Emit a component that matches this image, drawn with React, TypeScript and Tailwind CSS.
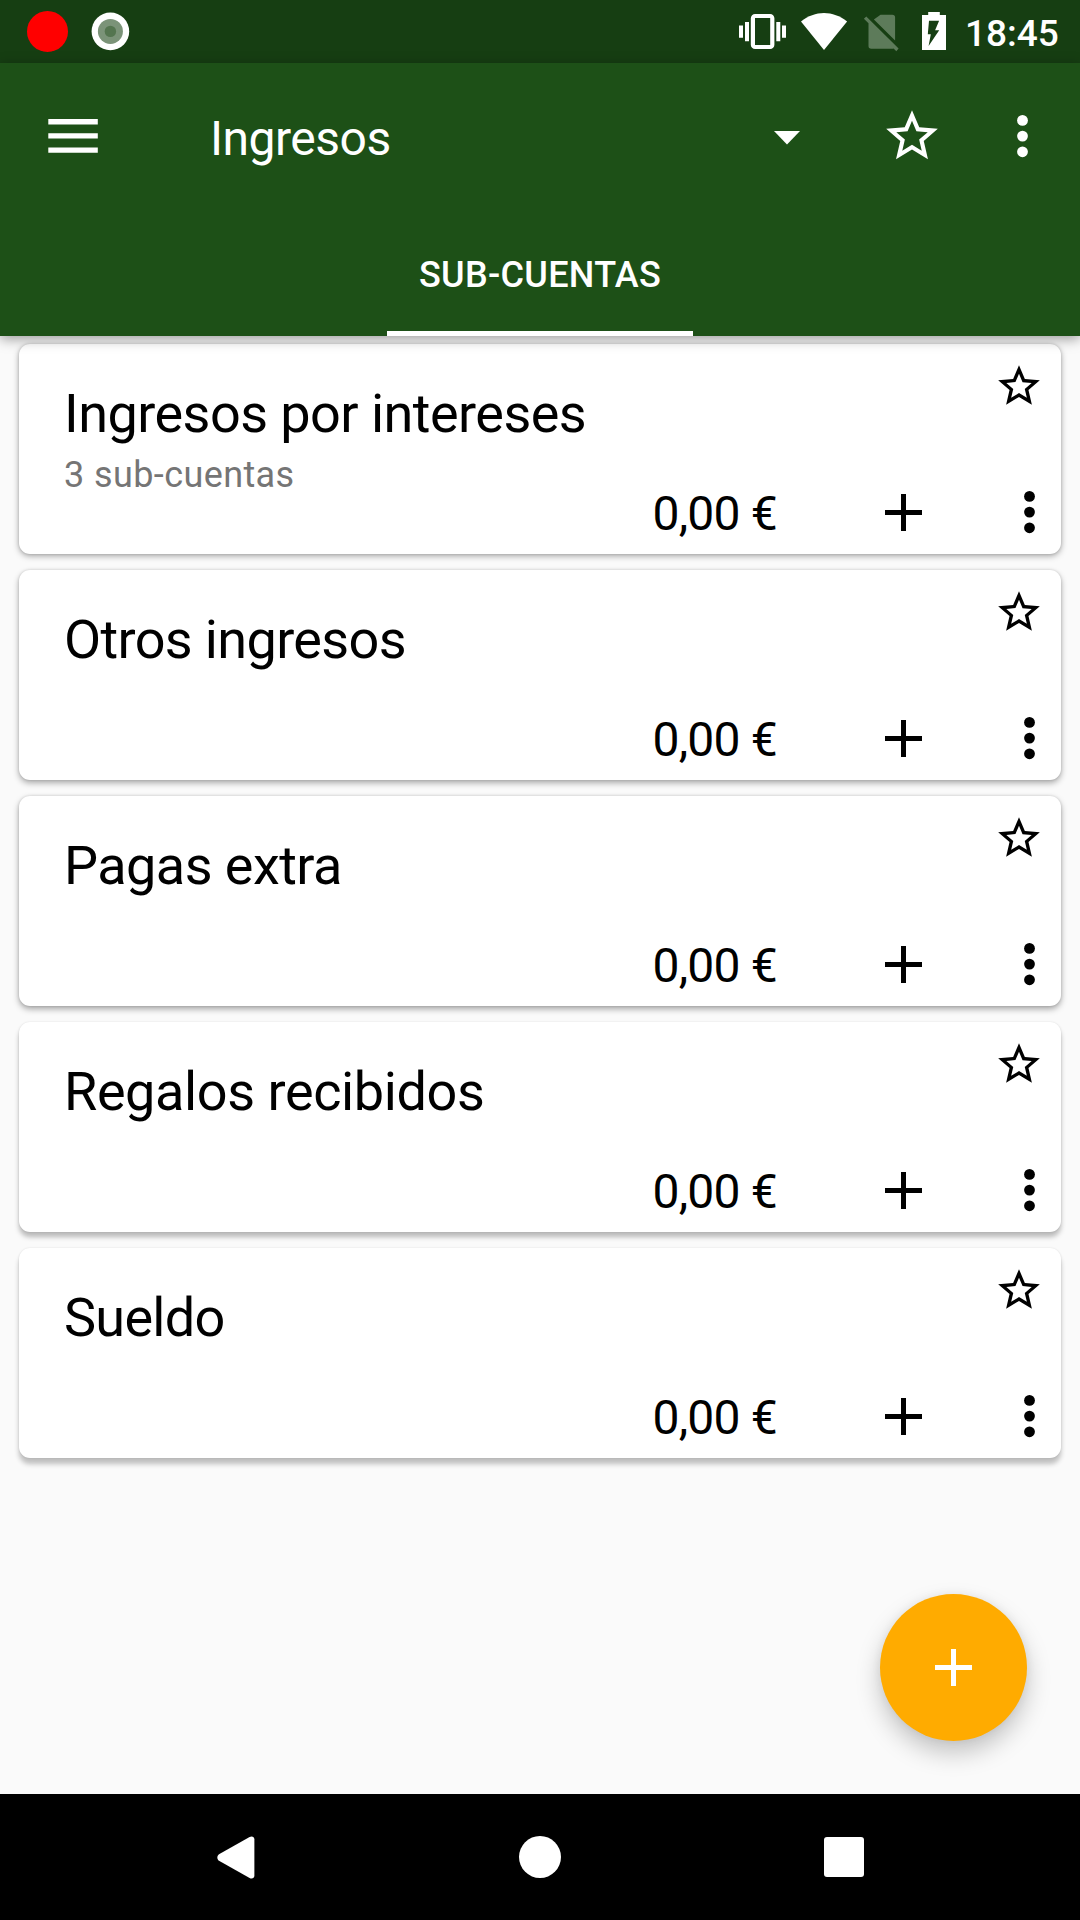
import React from "react";

const STAR =
  "M22 9.24l-7.19-.62L12 2 9.19 8.63 2 9.24l5.46 4.73L5.82 21 12 17.27 18.18 21l-1.63-7.03L22 9.24zM12 15.4l-3.76 2.27 1-4.28-3.32-2.88 4.38-.38L12 6.1l1.71 4.04 4.38.38-3.32 2.88 1 4.28L12 15.4z";

function Star({ className }: { className: string }) {
  return (
    <svg viewBox="0 0 24 24" fill="currentColor" className={className}>
      <path d={STAR} />
    </svg>
  );
}

function More({ className }: { className: string }) {
  return (
    <svg viewBox="0 0 11 43" fill="currentColor" className={className}>
      <circle cx="5.5" cy="5.4" r="5.4" />
      <circle cx="5.5" cy="21.1" r="5.4" />
      <circle cx="5.5" cy="36.8" r="5.4" />
    </svg>
  );
}

function Plus({ className }: { className: string }) {
  return (
    <svg viewBox="0 0 37 37" fill="currentColor" className={className}>
      <path d="M0 16h16V0h5v16h16v5H21v16h-5V21H0z" />
    </svg>
  );
}

function StatusBar() {
  return (
    <div className="flex h-[63px] shrink-0 justify-between bg-[#163e12] text-white">
      <svg width="140" height="63" viewBox="0 0 140 63">
        <circle cx="47.5" cy="31.4" r="20.5" fill="#ff0000" />
        <circle cx="110.4" cy="31.4" r="18.8" fill="#fff" />
        <circle cx="110.4" cy="31.4" r="12.5" fill="#7b9378" />
        <circle cx="110.4" cy="31.4" r="5.7" fill="#54754f" />
      </svg>
      <div className="flex">
        <svg width="220" height="63" viewBox="735 0 220 63" fill="#fff">
          <rect x="752.9" y="16" width="19.4" height="31" rx="2.2" fill="none" stroke="#fff" strokeWidth="4.2" />
          <path d="M739 25.5h4v12.3h-4zM745 22h4v19.3h-4zM776.3 22h4v19.3h-4zM782 25.5h4v12.3h-4z" />
          <path d="M824 50 801 21.6C808 16 816 13.1 824 13.1s16 2.9 23.1 8.5z" />
          <g fill="#5d7b5a">
            <path d="M880.5 14.7h11.8a2.8 2.8 0 0 1 2.8 2.8v22.9L873.9 19.6z" />
            <path d="M866.3 16.6 898.6 48.6 896.3 51.2 893.6 48.5a3 3 0 0 1-1.3.3h-21a2.8 2.8 0 0 1-2.8-2.8V23.3l-4.6-4.5z" />
          </g>
          <path
            fillRule="evenodd"
            d="M922 15h6.2v-3h11.6v3h6.2v35h-24zM929 20.8l-1.2 13.4h3l-2.2 11.8 10.6-15.8h-4.1l4-9.4z"
          />
        </svg>
        <span className="mr-[20px] w-[105px] pt-[12px] pl-[10px] text-[37px] leading-[44px] font-medium whitespace-nowrap">
          18:45
        </span>
      </div>
    </div>
  );
}

function Header() {
  return (
    <header className="relative z-10 flex h-[273px] shrink-0 flex-col bg-[#1d5017] text-white shadow-[0_3px_12px_rgba(0,0,0,0.38)]">
      <div className="flex h-[145px] items-center">
        <svg width="50" height="34" viewBox="0 0 50 34" fill="#fff" className="ml-[48px]">
          <path d="M.3 0h49.5v5.4H.3zM.3 14.2h49.5v5.4H.3zM.3 28.4h49.5v5.4H.3z" />
        </svg>
        <h1 className="ml-[112px] pt-[6px] text-[48px] leading-[56px] font-normal tracking-[-0.5px]">Ingresos</h1>
        <svg width="26" height="14" viewBox="0 0 26 14" fill="#fff" className="mt-[4px] mr-[81px] ml-auto">
          <path d="M0 0h26L13 13.4z" />
        </svg>
        <Star className="mr-[74px] size-[62px]" />
        <More className="mt-[2px] mr-[52px] h-[43px] w-[11px]" />
      </div>
      <div className="flex flex-1 justify-center">
        <div className="flex w-[306px] justify-center border-b-[5px] border-white pt-[46px]">
          <span className="text-[36px] leading-[42px] font-medium tracking-[0.3px] whitespace-nowrap">
            SUB-CUENTAS
          </span>
        </div>
      </div>
    </header>
  );
}

interface Account {
  name: string;
  detail?: string;
  tracking: string;
  shadow: string;
}

function AccountCard({ name, detail, tracking, shadow }: Account) {
  return (
    <article className={`flex h-[210px] justify-between rounded-[11px] bg-white text-black ${shadow}`}>
      <div className="pt-[38px] pl-[45px]">
        <h2 className={`text-[54px] leading-[64px] font-normal whitespace-nowrap ${tracking}`}>{name}</h2>
        {detail && (
          <p className="mt-[8px] text-[36px] leading-[42px] tracking-[0.4px] text-[#757575]">{detail}</p>
        )}
      </div>
      <div className="flex flex-col items-end justify-between pt-[17px] pb-[20px]">
        <Star className="mr-[17px] size-[50px]" />
        <div className="flex items-center">
          <span className="mr-[108px] pt-[3px] text-[48px] leading-[38px] tracking-[-0.8px] whitespace-nowrap">
            0,00 €
          </span>
          <Plus className="mr-[102px] size-[37px]" />
          <More className="mr-[26px] h-[43px] w-[11px]" />
        </div>
      </div>
    </article>
  );
}

const accounts: Account[] = [
  {
    name: "Ingresos por intereses",
    detail: "3 sub-cuentas",
    tracking: "tracking-[-0.54px]",
    shadow: "shadow-[0_2px_6px_rgba(0,0,0,0.34),0_0_3px_rgba(0,0,0,0.14)]",
  },
  {
    name: "Otros ingresos",
    tracking: "tracking-[-0.64px]",
    shadow: "shadow-[0_3px_6px_rgba(0,0,0,0.32),0_0_3px_rgba(0,0,0,0.14)]",
  },
  {
    name: "Pagas extra",
    tracking: "tracking-[-0.54px]",
    shadow: "shadow-[0_3px_6px_rgba(0,0,0,0.34),0_0_3px_rgba(0,0,0,0.14)]",
  },
  {
    name: "Regalos recibidos",
    tracking: "tracking-[-0.4px]",
    shadow: "shadow-[0_5px_5px_rgba(0,0,0,0.26),0_0_2px_rgba(0,0,0,0.12)]",
  },
  {
    name: "Sueldo",
    tracking: "tracking-[-0.7px]",
    shadow: "shadow-[0_6px_5px_rgba(0,0,0,0.24),0_0_2px_rgba(0,0,0,0.12)]",
  },
];

export default function App() {
  return (
    <div className="flex h-[1920px] w-[1080px] flex-col overflow-hidden bg-[#fafafa] font-[Roboto,sans-serif]">
      <StatusBar />
      <Header />
      <main className="relative flex flex-1 flex-col gap-[16px] px-[19px] pt-[8px]">
        {accounts.map((a) => (
          <AccountCard key={a.name} {...a} />
        ))}
        <button
          aria-label="Añadir"
          className="absolute right-[53px] bottom-[53px] flex size-[147px] items-center justify-center rounded-full bg-[#ffab00] text-white shadow-[0_12px_24px_rgba(0,0,0,0.22),0_0_10px_rgba(0,0,0,0.06)]"
        >
          <Plus className="size-[37px]" />
        </button>
      </main>
      <nav className="flex h-[126px] shrink-0 items-center justify-between bg-black pr-[216px] pl-[217px]">
        <svg width="38" height="43" viewBox="0 0 38 43" fill="#fff">
          <path d="M2 18.2 32.6 1.1C35 -.2 37.4 1 37.4 3.6v35.8c0 2.6-2.4 3.8-4.8 2.5L2 24.8C-.2 23.4-.2 19.6 2 18.2z" />
        </svg>
        <span className="size-[42px] rounded-full bg-white" />
        <span className="size-[40px] rounded-[3px] bg-white" />
      </nav>
    </div>
  );
}
